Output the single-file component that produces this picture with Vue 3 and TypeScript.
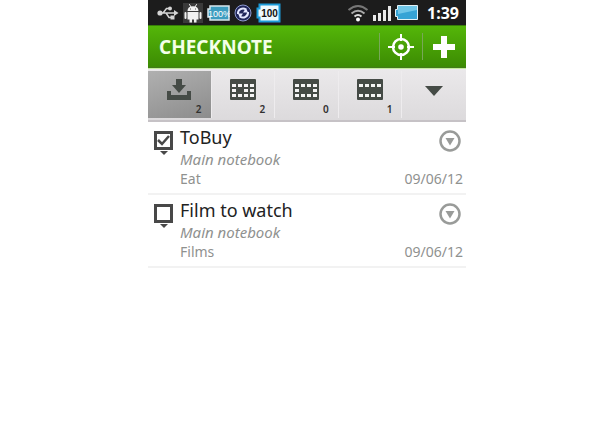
<script setup lang="ts">
import { ref } from 'vue'

interface Tab {
  id: string
  label: string
  count?: number
  cells?: number[][]
}

interface Note {
  id: number
  title: string
  notebook: string
  tag: string
  date: string
  done: boolean
}

const tabs: Tab[] = [
  { id: 'inbox', label: 'Inbox', count: 2 },
  { id: 'week', label: 'Week', count: 2, cells: [[1, 1, 1, 1], [1, 0, 1, 1], [1, 1, 1, 1]] },
  { id: 'today', label: 'Today', count: 0, cells: [[1, 1, 1, 1], [1, 0, 0, 1], [1, 1, 1, 1]] },
  { id: 'later', label: 'Later', count: 1, cells: [[1, 1, 1, 1], [0, 0, 0, 0], [1, 1, 1, 1]] },
  { id: 'more', label: 'More' },
]
const active = ref('inbox')

const notes = ref<Note[]>([
  { id: 1, title: 'ToBuy', notebook: 'Main notebook', tag: 'Eat', date: '09/06/12', done: true },
  { id: 2, title: 'Film to watch', notebook: 'Main notebook', tag: 'Films', date: '09/06/12', done: false },
])
</script>

<template>
  <div class="page">
    <div class="status">
      <div class="status-group">
        <svg width="22" height="16" viewBox="0 0 22 16" fill="none" stroke="#d4d4d4" stroke-width="1.500">
          <circle cx="3" cy="8" r="2.600" fill="#d4d4d4" stroke="none" />
          <path d="M3 8H19M6 8L9.500 3.500H13M9 8L12 12.500H15" />
          <path d="M17 5L21.500 8L17 11Z" fill="#d4d4d4" stroke="none" />
          <circle cx="13" cy="3.500" r="2" fill="#d4d4d4" stroke="none" />
          <path d="M13.500 10.500h4v4h-4z" fill="#d4d4d4" stroke="none" />
        </svg>
        <svg width="20" height="20" viewBox="0 0 20 20" fill="#f1f1f1">
          <path d="M0 0h20v20H0z" fill="#3a3a3a" />
          <path d="M4.500 8Q4.500 3.200 10 3.200T15.500 8ZM4.500 9h11v7.500h-11zM6.500 16h2.500v3.500H6.500zM11 16h2.500v3.500H11z" />
          <path d="M6.500 1.500L8 4M13.500 1.500L12 4" stroke="#f1f1f1" stroke-linecap="round" />
          <path d="M2.500 10v5M17.500 10v5" stroke="#f1f1f1" stroke-width="2" stroke-linecap="round" />
          <path d="M7 6h1M12 6h1" stroke="#555" />
        </svg>
        <svg width="23" height="16" viewBox="0 0 23 16">
          <path d="M3 1h19v14H3v-3H1V4h2z" fill="#3d9dc0" stroke="#d8e8ee" stroke-width="1.500" />
          <text x="12.500" y="12" text-anchor="middle" class="battery-small">100%</text>
        </svg>
        <svg width="18" height="18" viewBox="0 0 18 18" fill="none">
          <circle cx="9" cy="9" r="8" fill="#20265a" stroke="#8f9bd0" />
          <path d="M4 10a5 5 0 0 1 8-4.500M14 8a5 5 0 0 1-8 4.500" stroke="#e4e8ff" stroke-width="2" />
          <path d="M9 8.500h5L12 4zM9 9.500H4L6 14z" fill="#e4e8ff" />
        </svg>
        <svg width="25" height="20" viewBox="0 0 25 20">
          <path d="M3.500 1.500h20v17h-20v-4h-2v-9h2z" fill="#eefaff" stroke="#1d9cda" stroke-width="2" />
          <text x="13.500" y="14" text-anchor="middle" class="battery-big">100</text>
        </svg>
      </div>
      <div class="status-group right">
        <svg width="22" height="18" viewBox="0 0 22 18" fill="none" stroke-width="2">
          <path d="M1.500 6Q11-2 20.500 6" stroke="#777" />
          <path d="M4.500 9.500Q11 4 17.500 9.500" stroke="#aaa" />
          <path d="M7.500 12.500Q11 9.500 14.500 12.500" stroke="#ddd" />
          <circle cx="11" cy="15.500" r="2" fill="#fff" />
        </svg>
        <svg width="20" height="16" viewBox="0 0 20 16" fill="#e8e8e8">
          <path d="M1 10h3v6H1zM6 8h3v8H6zM11 5h3v11h-3zM16 1h3v15h-3z" />
        </svg>
        <svg width="23" height="16" viewBox="0 0 23 16">
          <path d="M2.500.500h20v14h-20v-3h-2v-7h2z" fill="#36a3d5" stroke="#e2f1f7" />
          <path d="M3 1h19v4L3 9z" fill="#70c6e8" />
        </svg>
        <time class="clock">1:39</time>
      </div>
    </div>

    <header class="bar">
      <h1>CHECKNOTE</h1>
      <button class="bar-button" type="button" aria-label="Locate">
        <svg width="26" height="26" viewBox="0 0 26 26" fill="none" stroke="#fff" stroke-width="2">
          <circle cx="13" cy="13" r="8" stroke-width="2.500" />
          <circle cx="13" cy="13" r="2.800" fill="#fff" stroke="none" />
          <path d="M13 0v7M13 19v7M0 13h7M19 13h7" />
        </svg>
      </button>
      <button class="bar-button" type="button" aria-label="Add note">
        <svg width="22" height="22" viewBox="0 0 22 22" fill="#fff">
          <path d="M8 0h6v8h8v6h-8v8H8v-8H0V8h8z" />
        </svg>
      </button>
    </header>

    <nav class="tabs">
      <button
        v-for="tab in tabs"
        :key="tab.id"
        type="button"
        class="tab"
        :class="{ active: active === tab.id }"
        :aria-label="tab.label"
        @click="active = tab.id"
      >
        <svg v-if="tab.id === 'inbox'" width="26" height="22" viewBox="0 0 26 22" fill="#454b46">
          <path d="M10 0h6v6h4l-7 8-7-8h4zM1 12h4v4h16v-4h4v9H1z" />
        </svg>
        <svg v-else-if="tab.cells" width="26" height="22" viewBox="0 0 26 22">
          <rect width="26" height="21" rx="1" fill="#454b46" />
          <template v-for="(row, y) in tab.cells" :key="y">
            <template v-for="(cell, x) in row" :key="x">
              <rect v-if="cell" :x="2 + x * 6" :y="5 + y * 5" width="4" height="3" fill="#f4f4f4" />
            </template>
          </template>
        </svg>
        <svg v-else width="26" height="22" viewBox="0 0 26 22" fill="#454b46">
          <path d="M4 7h18l-9 10z" />
        </svg>
        <span v-if="tab.count !== undefined" class="count">{{ tab.count }}</span>
      </button>
    </nav>

    <ul class="notes">
      <li v-for="note in notes" :key="note.id" class="note">
        <div class="check">
          <input :id="`note-${note.id}`" v-model="note.done" type="checkbox" />
          <svg v-if="note.done" class="tick" width="19" height="19" viewBox="0 0 19 19" fill="none" stroke="#484848" stroke-width="2.500">
            <path d="M4 9l4 4 7-8" />
          </svg>
          <svg width="8" height="4" viewBox="0 0 8 4" fill="#484848"><path d="M0 0h8L4 4z" /></svg>
        </div>
        <div class="body">
          <label class="title" :for="`note-${note.id}`">{{ note.title }}</label>
          <span class="notebook">{{ note.notebook }}</span>
          <span class="tag">{{ note.tag }}</span>
        </div>
        <div class="side">
          <button class="menu" type="button" :aria-label="`Options for ${note.title}`">
            <svg width="22" height="22" viewBox="0 0 22 22">
              <circle cx="11" cy="11" r="9.500" fill="none" stroke="#999b99" stroke-width="2.500" />
              <path d="M6.500 8h9L11 15.500z" fill="#999b99" />
            </svg>
          </button>
          <span class="date">{{ note.date }}</span>
        </div>
      </li>
    </ul>
  </div>
</template>

<style>
body {
  background: #fff;
}
</style>

<style scoped>
.page {
  padding: 0 149px 0 148px;
  font-family: "Noto Sans", "Open Sans", sans-serif;
}
button {
  margin: 0;
  padding: 0;
  border: 0;
  background: none;
  font: inherit;
  cursor: pointer;
}
svg {
  display: block;
  flex: none;
}
.status {
  display: flex;
  align-items: center;
  justify-content: space-between;
  box-sizing: border-box;
  height: 25px;
  padding: 0 7px 0 9px;
  background: #1c1c1c;
}
.status-group {
  display: flex;
  align-items: center;
  gap: 4px;
}
.status-group.right {
  gap: 3px;
}
.battery-small {
  font: 9px "Liberation Sans", sans-serif;
  fill: #fff;
}
.battery-big {
  font: bold 10px "Liberation Sans", sans-serif;
  fill: #111;
}
.clock {
  margin-left: 6px;
  color: #fff;
  font-size: 16px;
  font-weight: 700;
  line-height: 24px;
}
.bar {
  display: flex;
  align-items: center;
  box-sizing: border-box;
  height: 43px;
  padding: 0 1px 0 11px;
  border-top: 1px solid #377d08;
  border-bottom: 1px solid #427b1b;
  background: linear-gradient(#54b609, #3c8b03);
}
h1 {
  flex: 1;
  margin: 0;
  color: #f4ffe9;
  font-size: 19px;
  font-weight: 700;
  line-height: 24px;
}
.bar-button {
  display: flex;
  align-items: center;
  justify-content: center;
  width: 43px;
  height: 27px;
  border-left: 1px solid #78a858;
}
.tabs {
  display: grid;
  grid-template-columns: repeat(5, 1fr);
  box-sizing: border-box;
  height: 54px;
  padding: 2px 0;
  border-top: 1px solid #c4ec9c;
  border-bottom: 2px solid #c6c2c6;
  background: linear-gradient(#ebe9eb, #dcdadc);
}
.tab {
  display: flex;
  flex-direction: column;
  align-items: center;
  padding-top: 8px;
  border-right: 1px solid #eeecee;
}
.tab:last-child {
  border-right: 0;
}
.tab.active {
  background: linear-gradient(160deg, #b0b0b0, #8c8c8c);
}
.count {
  align-self: flex-end;
  margin-right: 9px;
  color: #303030;
  font-size: 10px;
  font-weight: 600;
  line-height: 16px;
}
.notes {
  margin: 0;
  padding: 0;
  list-style: none;
}
.note {
  display: flex;
  box-sizing: border-box;
  height: 73px;
  padding: 4px 3px 0 6px;
  border-bottom: 2px solid #f2f2f2;
}
.check {
  display: flex;
  flex-direction: column;
  align-items: center;
  gap: 1px;
  position: relative;
  width: 19px;
  margin-right: 7px;
  padding-top: 5px;
}
.check input {
  appearance: none;
  width: 19px;
  height: 19px;
  margin: 0;
  border: 3px solid #484848;
  background: #fff;
}
.tick {
  position: absolute;
  top: 5px;
  left: 0;
  pointer-events: none;
}
.body {
  display: flex;
  flex: 1;
  flex-direction: column;
  color: #8f918f;
  font-size: 14px;
}
.title {
  color: #222;
  font-size: 18px;
  line-height: 23px;
}
.notebook {
  font-size: 15px;
  font-style: italic;
  line-height: 21px;
}
.tag,
.date {
  line-height: 18px;
}
.side {
  display: flex;
  flex-direction: column;
  align-items: flex-end;
  justify-content: space-between;
  padding: 4px 0 5px;
  color: #8f918f;
  font-size: 14px;
}
.menu {
  margin-right: 2px;
}
</style>
